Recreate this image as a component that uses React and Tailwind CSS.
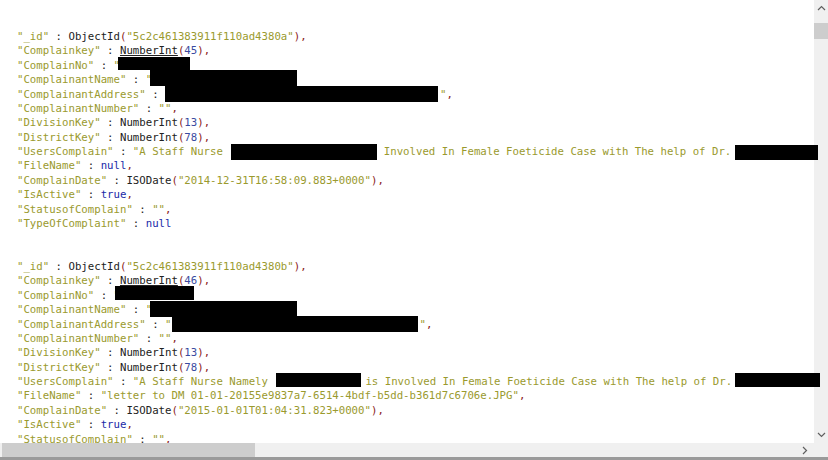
import React from 'react';

// syntax colours
const S = ({ children }) => <span className="text-[#9a9a2e]">{children}</span>;
const D = ({ children }) => <span className="text-[#222222]">{children}</span>;
const R = ({ children }) => <span className="text-[#8b1a1a]">{children}</span>;
const N = ({ children }) => <span className="text-[#3a4aa0]">{children}</span>;
const W = ({ children }) => <span className="text-[#1a2aa8]">{children}</span>;

const Line = ({ children }) => (
  <div className="h-[14.38px] leading-[14.38px] whitespace-pre">{children}</div>
);

const Sep = () => <D> : </D>;

const Num = ({ v, link }) => (
  <>
    <D><span className={link ? 'underline' : ''}>NumberInt</span></D>
    <R>(</R>
    <N>{v}</N>
    <R>)</R>
    <R>,</R>
  </>
);

const Chevron = ({ dir }) => {
  const pts = {
    up: '1,6 4.5,2.5 8,6',
    down: '1,3 4.5,6.5 8,3',
    right: '3,1 6.5,4.5 3,8',
  }[dir];
  return (
    <svg width="9" height="9" viewBox="0 0 9 9">
      <polyline points={pts} fill="none" stroke="#606060" strokeWidth="1.2" />
    </svg>
  );
};

const Block1 = () => (
  <>
    <Line><S>"_id"</S><Sep /><D>ObjectId</D><R>(</R><S>"5c2c461383911f110ad4380a"</S><R>)</R><R>,</R></Line>
    <Line><S>"Complainkey"</S><Sep /><Num v="45" link /></Line>
    <Line>
      <S>"ComplainNo"</S><Sep /><S>"</S>
      <span className="inline-block align-top bg-black w-[72px] h-[13px] ml-[-2px] mt-[-2px] mb-[-11px]" />
    </Line>
    <Line>
      <S>"ComplainantName"</S><Sep /><S>"</S>
      <span className="inline-block align-top bg-black w-[147px] h-[16px] ml-[-2.5px] mt-[-3px] mb-[-13px]" />
    </Line>
    <Line>
      <S>"ComplainantAddress"</S><Sep />
      <span className="inline-block align-top bg-black w-[273px] h-[16px] mt-[-1.5px] mb-[-14.5px]" />
      <span className="ml-[2px]"><S>"</S></span><R>,</R>
    </Line>
    <Line><S>"ComplainantNumber"</S><Sep /><S>""</S><R>,</R></Line>
    <Line><S>"DivisionKey"</S><Sep /><Num v="13" /></Line>
    <Line><S>"DistrictKey"</S><Sep /><Num v="78" /></Line>
    <Line>
      <S>"UsersComplain"</S><Sep /><S>"A Staff Nurse </S>
      <span className="inline-block align-top bg-black w-[146px] h-[16px] ml-[2px] mt-[-1px] mb-[-15px]" />
      <S> Involved In Female Foeticide Case with The help of Dr.</S>
      <span className="relative z-10 inline-block align-top bg-black w-[83px] h-[15px] ml-[4px] mb-[-15px]" />
    </Line>
    <Line><S>"FileName"</S><Sep /><W>null</W><R>,</R></Line>
    <Line><S>"ComplainDate"</S><Sep /><D>ISODate</D><R>(</R><S>"2014-12-31T16:58:09.883+0000"</S><R>)</R><R>,</R></Line>
    <Line><S>"IsActive"</S><Sep /><W>true</W><R>,</R></Line>
    <Line><S>"StatusofComplain"</S><Sep /><S>""</S><R>,</R></Line>
    <Line><S>"TypeOfComplaint"</S><Sep /><W>null</W></Line>
  </>
);

const Block2 = () => (
  <>
    <Line><S>"_id"</S><Sep /><D>ObjectId</D><R>(</R><S>"5c2c461383911f110ad4380b"</S><R>)</R><R>,</R></Line>
    <Line><S>"Complainkey"</S><Sep /><Num v="46" link /></Line>
    <Line>
      <S>"ComplainNo"</S><Sep /><S>"</S>
      <span className="inline-block align-top bg-black w-[79px] h-[14px] ml-[-5px] mt-[-3px] mb-[-11px]" />
    </Line>
    <Line>
      <S>"ComplainantName"</S><Sep /><S>"</S>
      <span className="inline-block align-top bg-black w-[147px] h-[16px] ml-[-2.5px] mt-[-2px] mb-[-14px]" />
    </Line>
    <Line>
      <S>"ComplainantAddress"</S><Sep /><S>"</S>
      <span className="inline-block align-top bg-black w-[246px] h-[16px] ml-[1px] mt-[-1.5px] mb-[-14.5px]" />
      <span className="ml-[1px]"><S>"</S></span><R>,</R>
    </Line>
    <Line><S>"ComplainantNumber"</S><Sep /><S>""</S><R>,</R></Line>
    <Line><S>"DivisionKey"</S><Sep /><Num v="13" /></Line>
    <Line><S>"DistrictKey"</S><Sep /><Num v="78" /></Line>
    <Line>
      <S>"UsersComplain"</S><Sep /><S>"A Staff Nurse Namely </S>
      <span className="inline-block align-top bg-black w-[85px] h-[14px] ml-[2px] mt-[-2px] mb-[-12px]" />
      <span className="ml-[4px]"><S>is Involved In Female Foeticide Case with The help of Dr.</S></span>
      <span className="relative z-10 inline-block align-top bg-black w-[85px] h-[14px] ml-[3px] mt-[-2px] mb-[-12px]" />
    </Line>
    <Line><S>"FileName"</S><Sep /><S>"letter to DM 01-01-20155e9837a7-6514-4bdf-b5dd-b361d7c6706e.JPG"</S><R>,</R></Line>
    <Line><S>"ComplainDate"</S><Sep /><D>ISODate</D><R>(</R><S>"2015-01-01T01:04:31.823+0000"</S><R>)</R><R>,</R></Line>
    <Line><S>"IsActive"</S><Sep /><W>true</W><R>,</R></Line>
    <Line><S>"StatusofComplain"</S><Sep /><S>""</S><R>,</R></Line>
    <Line><S>"TypeOfComplaint"</S><Sep /><W>null</W></Line>
  </>
);

const App = () => {
  return (
    <div className="w-[828px] h-[460px] bg-white flex flex-col overflow-hidden">
      <div className="flex flex-1 min-h-0 overflow-hidden">
        {/* Document text (redaction marks spill over the scrollbar) */}
        <div
          className="flex-1 min-w-0 overflow-visible pt-[30px] pl-[17px] text-[10.7px]"
          style={{ fontFamily: '"DejaVu Sans Mono", "Liberation Mono", monospace' }}
        >
          <Block1 />
          <Line />
          <Line />
          <Block2 />
        </div>

        {/* Vertical scrollbar */}
        <div className="w-[14px] shrink-0 bg-[#f0f0f0] flex flex-col items-center">
          <div className="h-[16px] flex items-center justify-center">
            <Chevron dir="up" />
          </div>
          <div className="w-full h-[16px] mt-[7px] bg-[#cdcdcd]" />
          <div className="flex-1" />
          <div className="h-[16px] mb-[1px] flex items-center justify-center">
            <Chevron dir="down" />
          </div>
        </div>
      </div>

      {/* Horizontal scrollbar */}
      <div className="h-[14px] bg-[#f0f0f0] flex items-center">
        <div className="ml-[2px] w-[253px] h-full bg-[#cdcdcd]" />
        <div className="flex-1" />
        <div className="w-[16px] flex items-center justify-center mr-[16px]">
          <Chevron dir="right" />
        </div>
      </div>
      <div className="h-[3px] bg-[#9a9a9a]" />
    </div>
  );
};

export default App;
